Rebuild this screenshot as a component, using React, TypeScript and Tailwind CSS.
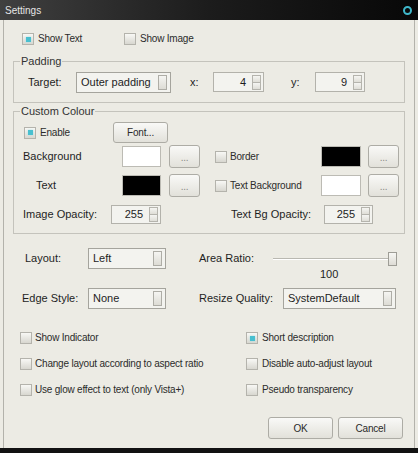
import React from 'react';

function Check({ checked = false, label, gap = 'gap-[4px]', className = '' }: {
  checked?: boolean;
  label: string;
  gap?: string;
  className?: string;
}) {
  return (
    <div className={`h-[12px] flex items-center ${gap} ${className}`}>
      <div className="w-[12px] h-[12px] flex-shrink-0 flex items-center justify-center border border-[#b4b3ac] bg-linear-to-b from-[#f8f8f5] to-[#d8d7d0]">
        {checked && <div className="w-[5px] h-[5px] bg-[#48bfcf] shadow-[0_0_2px_#9fdde6]" />}
      </div>
      <span className="text-[10px] leading-[12px] tracking-[-0.2px] text-[#2b2b2b] whitespace-nowrap">{label}</span>
    </div>
  );
}

function Combo({ value, w }: { value: string; w: string }) {
  return (
    <div className={`${w} h-[21px] flex items-center border border-[#a5a49d] bg-[#f3f3ef]`}>
      <span className="flex-1 pl-[4px] text-[11px] text-[#1e1e1e] whitespace-nowrap">{value}</span>
      <div className="w-[9px] h-[15px] mr-[3px] border border-[#aeada6] bg-linear-to-b from-[#f5f5f2] to-[#dddcd5]" />
    </div>
  );
}

function Spin({ value, w, h = 'h-[20px]' }: { value: string; w: string; h?: string }) {
  return (
    <div className={`${w} ${h} flex items-center border border-[#b3b2ab] bg-[#f3f3ef]`}>
      <span className="flex-1 text-right pr-[6px] text-[11px] text-[#1e1e1e]">{value}</span>
      <div className="w-[9px] h-[15px] mr-[2px] flex flex-col">
        <div className="flex-1 border border-[#b5b4ad] bg-linear-to-b from-[#f5f5f2] to-[#dfded7]" />
        <div className="flex-1 border border-t-0 border-[#b5b4ad] bg-linear-to-b from-[#f5f5f2] to-[#dfded7]" />
      </div>
    </div>
  );
}

function Btn({ children, className }: { children: React.ReactNode; className: string }) {
  return (
    <div className={`${className} flex-shrink-0 flex items-center justify-center rounded-[3px] border border-[#adaca5] bg-linear-to-b from-[#f9f9f7] to-[#e2e1da] text-[10px] tracking-[-0.2px] text-[#2a2a2a]`}>
      {children}
    </div>
  );
}

function Swatch({ color, w }: { color: string; w: string }) {
  return <div className={`${w} h-[21px] flex-shrink-0 border border-[#bcbbb4] ${color}`} />;
}

function Dots() {
  return <span className="text-[#8a8a85] leading-none pt-[2px]">...</span>;
}

export default function App() {
  return (
    <div className="w-[418px] h-[453px] flex flex-col bg-[#ecebe4] font-['Liberation_Sans',Arial,sans-serif] text-[#1e1e1e] select-none overflow-hidden">
      {/* Title bar */}
      <div className="h-[20px] flex-shrink-0 flex items-center justify-between pl-[5px] pr-[6px] bg-linear-to-r from-[#404040] via-[#1c1c1c] to-[#080808]">
        <span className="text-[10px] text-[#e6e6e6]">Settings</span>
        <span className="w-[9px] h-[9px] rounded-full border-2 border-[#3fb7ca]" />
      </div>

      <div className="flex-1 flex px-[3px]">
        <div className="flex-1 flex flex-col border-x border-[#b3b2ab]">
          {/* Top checkboxes */}
          <div className="mt-[13px] h-[12px] flex items-center pl-[18px]">
            <Check checked label="Show Text" className="w-[102px]" />
            <Check label="Show Image" />
          </div>

          {/* Padding */}
          <fieldset className="mt-[10px] ml-[9px] w-[392px] border border-[#c4c3bc] pt-[5px] pb-[10px]">
            <legend className="ml-[6px] px-[1px] text-[11px] leading-[12px] text-[#333]">Padding</legend>
            <div className="h-[20px] flex items-center pl-[14px]">
              <span className="w-[48px] text-[11px]">Target:</span>
              <Combo value="Outer padding" w="w-[95px]" />
              <span className="ml-[19px] w-[23px] text-[11px]">x:</span>
              <Spin value="4" w="w-[51px]" />
              <span className="ml-[27px] w-[24px] text-[11px]">y:</span>
              <Spin value="9" w="w-[50px]" />
            </div>
          </fieldset>

          {/* Custom Colour */}
          <fieldset className="mt-[2px] ml-[9px] w-[392px] border border-[#c4c3bc] pt-[5px] pb-[9px]">
            <legend className="ml-[6px] px-[1px] text-[11px] leading-[12px] text-[#333]">Custom Colour</legend>
            <div className="h-[21px] flex items-center pl-[10px]">
              <Check checked label="Enable" className="w-[89px]" />
              <Btn className="w-[55px] h-[21px]">Font...</Btn>
            </div>
            <div className="mt-[2px] h-[23px] flex items-center pl-[9px]">
              <span className="w-[99px] text-[11px]">Background</span>
              <Swatch color="bg-white" w="w-[39px]" />
              <Btn className="ml-[8px] w-[31px] h-[23px]"><Dots /></Btn>
              <Check label="Border" gap="gap-[3px]" className="ml-[15px] w-[106px]" />
              <Swatch color="bg-black" w="w-[40px]" />
              <Btn className="ml-[7px] w-[31px] h-[23px]"><Dots /></Btn>
            </div>
            <div className="mt-[6px] h-[23px] flex items-center pl-[9px]">
              <span className="w-[99px] pl-[13px] text-[11px]">Text</span>
              <Swatch color="bg-black" w="w-[39px]" />
              <Btn className="ml-[8px] w-[31px] h-[23px]"><Dots /></Btn>
              <Check label="Text Background" gap="gap-[3px]" className="ml-[15px] w-[106px]" />
              <Swatch color="bg-white" w="w-[40px]" />
              <Btn className="ml-[7px] w-[31px] h-[23px]"><Dots /></Btn>
            </div>
            <div className="mt-[8px] h-[19px] flex items-center pl-[9px]">
              <span className="w-[88px] text-[11px]">Image Opacity:</span>
              <Spin value="255" w="w-[50px]" h="h-[19px]" />
              <span className="ml-[70px] w-[93px] text-[11px]">Text Bg Opacity:</span>
              <Spin value="255" w="w-[49px]" h="h-[19px]" />
            </div>
          </fieldset>

          {/* Layout / Area ratio */}
          <div className="mt-[14px] h-[21px] flex items-center pl-[21px]">
            <span className="w-[63px] text-[11px]">Layout:</span>
            <Combo value="Left" w="w-[78px]" />
            <span className="ml-[33px] w-[74px] text-[11px]">Area Ratio:</span>
            <div className="w-[124px] h-[21px] flex items-center">
              <div className="flex-1 h-[2px] border-t border-[#b9b8b1] border-b border-b-white" />
              <div className="w-[9px] h-[14px] border border-[#9e9d96] bg-linear-to-b from-[#f7f7f4] to-[#dedcd5]" />
            </div>
          </div>
          <div className="h-[10px] pl-[316px] text-[11px] leading-[10px]">100</div>

          {/* Edge style / Resize quality */}
          <div className="mt-[9px] h-[21px] flex items-center pl-[18px]">
            <span className="w-[66px] text-[11px]">Edge Style:</span>
            <Combo value="None" w="w-[78px]" />
            <span className="ml-[33px] w-[84px] text-[11px]">Resize Quality:</span>
            <Combo value="SystemDefault" w="w-[113px]" />
          </div>

          {/* Options */}
          <div className="mt-[23px] pl-[16px] grid grid-cols-[226px_1fr] gap-y-[14px]">
            <Check label="Show Indicator" gap="gap-[3px]" />
            <Check checked label="Short description" />
            <Check label="Change layout according to aspect ratio" gap="gap-[3px]" />
            <Check label="Disable auto-adjust layout" />
            <Check label="Use glow effect to text (only Vista+)" gap="gap-[3px]" />
            <Check label="Pseudo transparency" />
          </div>

          {/* Dialog buttons */}
          <div className="mt-[21px] flex justify-end gap-[5px] pr-[11px]">
            <Btn className="w-[65px] h-[22px]">OK</Btn>
            <Btn className="w-[65px] h-[22px]">Cancel</Btn>
          </div>
        </div>
      </div>

      <div className="h-[5px] flex-shrink-0 bg-[#121212]" />
    </div>
  );
}
